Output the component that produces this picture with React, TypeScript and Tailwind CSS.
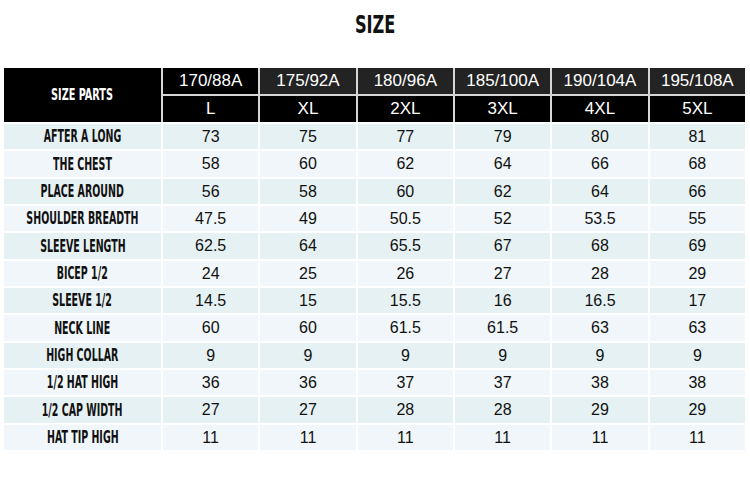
import React from "react";

const sizes = [
  ["170/88A", "L"],
  ["175/92A", "XL"],
  ["180/96A", "2XL"],
  ["185/100A", "3XL"],
  ["190/104A", "4XL"],
  ["195/108A", "5XL"],
];

const rows: [string, string[]][] = [
  ["AFTER A LONG", ["73", "75", "77", "79", "80", "81"]],
  ["THE CHEST", ["58", "60", "62", "64", "66", "68"]],
  ["PLACE AROUND", ["56", "58", "60", "62", "64", "66"]],
  ["SHOULDER BREADTH", ["47.5", "49", "50.5", "52", "53.5", "55"]],
  ["SLEEVE LENGTH", ["62.5", "64", "65.5", "67", "68", "69"]],
  ["BICEP 1/2", ["24", "25", "26", "27", "28", "29"]],
  ["SLEEVE 1/2", ["14.5", "15", "15.5", "16", "16.5", "17"]],
  ["NECK LINE", ["60", "60", "61.5", "61.5", "63", "63"]],
  ["HIGH COLLAR", ["9", "9", "9", "9", "9", "9"]],
  ["1/2 HAT HIGH", ["36", "36", "37", "37", "38", "38"]],
  ["1/2 CAP WIDTH", ["27", "27", "28", "28", "29", "29"]],
  ["HAT TIP HIGH", ["11", "11", "11", "11", "11", "11"]],
];

const cond = { fontFamily: '"DejaVu Sans Condensed", "DejaVu Sans", sans-serif' };
const sans = { fontFamily: '"Liberation Sans", Arial, sans-serif' };

export default function App() {
  return (
    <div className="w-[750px] h-[488px] bg-white overflow-hidden">
      <div className="h-[68px] flex justify-center pt-[10px]">
        <span
          className="inline-block text-[25px] font-bold leading-[30px] text-[#111] scale-x-[0.72]"
          style={cond}
        >
          SIZE
        </span>
      </div>
      <div className="ml-[4px] w-[741px] flex flex-col gap-[2px]">
        <div className="grid grid-cols-[157px_repeat(6,1fr)] grid-rows-[26px_26px] gap-[2px] bg-[#d6d6d6]">
          <div className="row-span-2 bg-black flex items-center justify-center">
            <span
              className="inline-block text-white font-bold text-[15px] scale-x-[0.72]"
              style={cond}
            >
              SIZE PARTS
            </span>
          </div>
          {sizes.map(([a], i) => (
            <div
              key={a}
              className={`${i === 0 ? "bg-black" : "bg-[#232323]"} flex items-center justify-center text-white text-[17px]`}
              style={sans}
            >
              {a}
            </div>
          ))}
          {sizes.map(([a, b]) => (
            <div
              key={a + b}
              className="bg-black flex items-center justify-center text-white text-[17px]"
              style={sans}
            >
              {b}
            </div>
          ))}
        </div>
        <div className="grid grid-cols-[157px_repeat(6,1fr)] auto-rows-[25.33px] gap-[2px] bg-white">
          {rows.map(([label, vals], r) => {
            const bg = r % 2 === 0 ? "bg-[#e6f1f3]" : "bg-[#f0f6f9]";
            return (
              <React.Fragment key={label}>
                <div className={`${bg} flex items-center justify-center pt-[1px]`}>
                  <span
                    className="inline-block whitespace-nowrap text-[#111] font-bold text-[17px] scale-x-[0.62]"
                    style={cond}
                  >
                    {label}
                  </span>
                </div>
                {vals.map((v, i) => (
                  <div
                    key={i}
                    className={`${bg} flex items-center justify-center pt-[1px] text-[#111] text-[16px]`}
                    style={sans}
                  >
                    {v}
                  </div>
                ))}
              </React.Fragment>
            );
          })}
        </div>
      </div>
    </div>
  );
}
